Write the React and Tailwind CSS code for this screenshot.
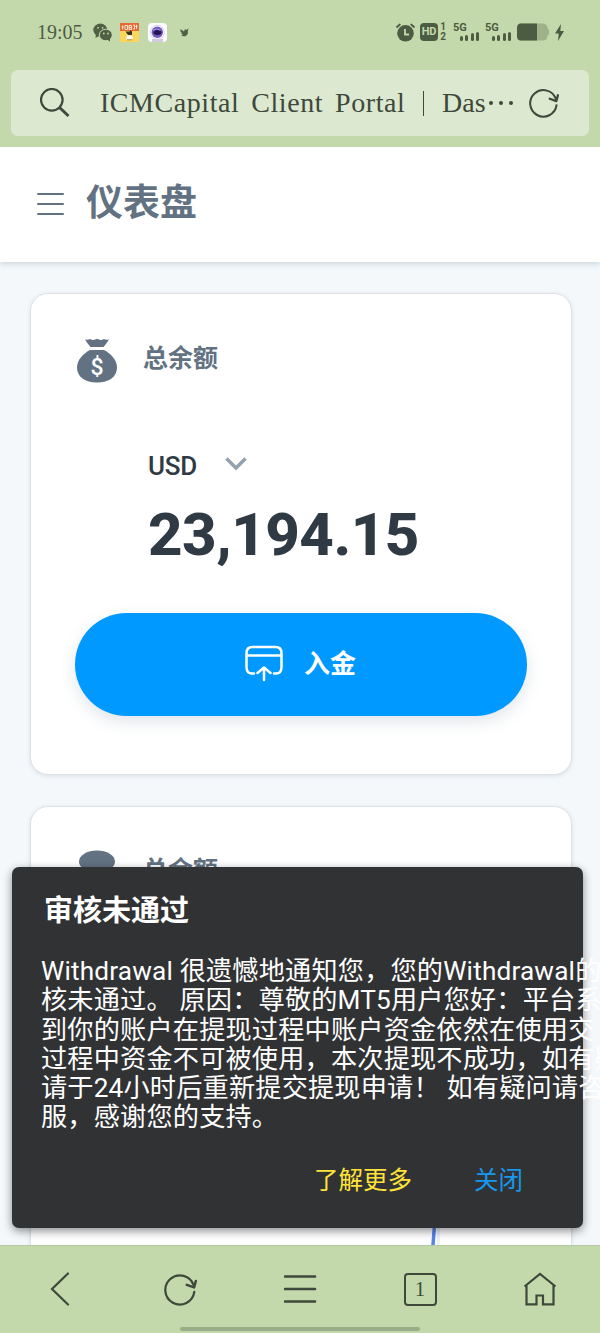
import { useState } from "react";

const MESSAGE = [
  "Withdrawal 很遗憾地通知您，您的Withdrawal的",
  "核未通过。 原因：尊敬的MT5用户您好：平台系",
  "到你的账户在提现过程中账户资金依然在使用交",
  "过程中资金不可被使用，本次提现不成功，如有疑",
  "请于24小时后重新提交提现申请！ 如有疑问请咨",
  "服，感谢您的支持。",
];

function WechatIcon() {
  return (
    <svg width="19" height="19" viewBox="0 0 19 19" className="ml-[10px]">
      <ellipse cx="7.3" cy="7" rx="7" ry="6.5" fill="#4f6045" />
      <path d="M3 11 L2.4 15 L7 12.5Z" fill="#4f6045" />
      <ellipse cx="12.8" cy="12" rx="6.5" ry="5.8" fill="#4f6045" stroke="#c4d9ab" strokeWidth="1" />
      <path d="M14 16.5 L17 18.5 L17 15Z" fill="#4f6045" />
      <g fill="#c4d9ab">
        <circle cx="5" cy="4.8" r="0.9" />
        <circle cx="9.6" cy="4.8" r="0.9" />
        <circle cx="10.8" cy="10.5" r="0.9" />
        <circle cx="15" cy="10.5" r="0.9" />
      </g>
    </svg>
  );
}

function NewsIcon() {
  return (
    <svg width="19" height="19" viewBox="0 0 19 19" className="ml-[8px]">
      <rect width="19" height="19" fill="#fbd65c" />
      <rect width="19" height="8" fill="#e96a35" />
      <path d="M2.5 2.500v4M1.500 4h2.500M5 2.500h2.500v4H5zM9 2.500h2.500v4H9zM9 4.500h2.500M13 2h1.500v4H13M16.500 1.800v4M15.500 3.500h2" fill="none" stroke="#fff1dd" strokeWidth="0.9" />
      <path d="M5.500 8.500h4l1-1.500 1.500 1.500v3.500H8z" fill="#3d3323" />
      <path d="M7 12.500h5l1 4H6z" fill="#fff" />
      <path d="M7 16.800h5.500" stroke="#a57a25" strokeWidth="0.8" />
    </svg>
  );
}

function CameraAppIcon() {
  return (
    <svg width="19" height="19" viewBox="0 0 19 19" className="ml-[9px]">
      <rect width="19" height="19" rx="4" fill="#fbfaff" />
      <path d="M4 16h11v3H4z" fill="#d1cbe0" />
      <circle cx="9.300" cy="9.300" r="7" fill="#fff" stroke="#cfc8e8" strokeWidth="0.8" />
      <circle cx="9.300" cy="9.300" r="5.700" fill="#7059bd" />
      <ellipse cx="9.500" cy="9.500" rx="4" ry="2.400" fill="#251451" />
      <path d="M5.500 7.500q3-3 7 0" fill="none" stroke="#a998e8" strokeWidth="1.200" />
    </svg>
  );
}

function BirdIcon() {
  return (
    <svg width="9" height="9" viewBox="0 0 9 9" className="ml-[13px]">
      <path d="M.5 1 4 3.500 5 1 6 2 8.500.500 7.800 3V6L5.500 8.300 1.200 8 3 6.500 1 5.800 2 5 .5 3.500z" fill="#4f6045" />
    </svg>
  );
}

function AlarmIcon() {
  return (
    <svg width="19" height="19" viewBox="0 0 19 19">
      <circle cx="9.500" cy="10.300" r="8.300" fill="#4c5c43" />
      <path d="M1 4 3.800 1.500M18 4 15.200 1.500" stroke="#4c5c43" strokeWidth="1.800" strokeLinecap="round" />
      <path d="M9 6v5.500h4" fill="none" stroke="#c4d9ab" strokeWidth="1.800" />
    </svg>
  );
}

function Signal() {
  return (
    <div className="w-[26px] h-[18px]">
      <div className="font-['Roboto',sans-serif] font-bold text-[11px] leading-[9px]">5G</div>
      <div className="flex items-end justify-end gap-[2.500px] h-[9px]">
        <i className="w-[3px] h-[5px] rounded-sm bg-[#4c5c43]" />
        <i className="w-[3px] h-[6px] rounded-sm bg-[#4c5c43]" />
        <i className="w-[3px] h-[8px] rounded-sm bg-[#4c5c43]" />
        <i className="w-[3px] h-[9px] rounded-sm bg-[#4c5c43]" />
      </div>
    </div>
  );
}

function StatusBar() {
  return (
    <div className="h-[70px] pt-[22px] pl-[37px] pr-[36px] flex items-start text-[#4c5c43]">
      <div className="flex items-center h-5">
        <span className="w-[46px] text-[20px] leading-5">19:05</span>
        <WechatIcon />
        <NewsIcon />
        <CameraAppIcon />
        <BirdIcon />
      </div>
      <div className="ml-auto flex items-center h-5">
        <AlarmIcon />
        <div className="ml-[5px] w-[18px] h-[18px] rounded-[4px] bg-[#4c5c43] text-[#c4d9ab] font-['Roboto',sans-serif] font-bold text-[11px] leading-[18px] tracking-[-0.300px] text-center">
          HD
        </div>
        <div className="ml-[1px] w-[8px] font-['Roboto',sans-serif] font-bold text-[10px] leading-[10px] text-center">
          <div>1</div>
          <div>2</div>
        </div>
        <div className="ml-[6px] flex gap-[6px]">
          <Signal />
          <Signal />
        </div>
        <svg width="33" height="18" viewBox="0 0 33 18" className="ml-[6px]">
          <path d="M4 .5H26q4 0 4.500 4.500l1.500 2v4l-1.500 2q-.5 4.500-4.500 4.500H4Q0 17.500 0 13V5Q0 .5 4 .5" fill="#9db287" />
          <path d="M20 .5H4Q0 .5 0 5v8q0 4.500 4 4.500h16z" fill="#4c5c43" />
        </svg>
        <svg width="9" height="17" viewBox="0 0 9 17" className="ml-[5px]">
          <path d="M6 0 0 9.500h3.700L3 17 9 7H5.300z" fill="#4c5c43" />
        </svg>
      </div>
    </div>
  );
}

function ReloadIcon({ size }) {
  return (
    <svg width={size} height={size} viewBox="0 0 34 34" fill="none" stroke="currentColor" strokeWidth="2.300" strokeLinecap="round" strokeLinejoin="round">
      <path d="M31.200 19.500A15 15 0 1 1 30.500 12.500" />
      <path d="M23.500 12.200 31 14.800 32.800 8.200" strokeWidth="2.600" />
    </svg>
  );
}

function AddressBar() {
  return (
    <div className="mx-[11px] h-[66px] rounded-[7px] bg-[#dce8d0] flex items-center pl-[29px] pr-[29px] text-[#3e493b]">
      <svg width="30" height="30" viewBox="0 0 30 30" fill="none" stroke="currentColor" strokeWidth="2.200">
        <circle cx="11.800" cy="11.800" r="10.800" />
        <path d="M19.500 19.500 28.500 28" strokeWidth="3" />
      </svg>
      <div className="ml-[30px] w-[429px] flex items-center whitespace-nowrap text-[28px] leading-8 tracking-[0.550px] [word-spacing:4.500px]">
        <span className="w-[305px]">ICMCapital Client Portal</span>
        <i className="ml-[18px] w-px h-[25px] bg-[#3e493b]" />
        <span className="ml-[18px] tracking-normal">Das</span>
        <span className="ml-[3px] flex gap-[6px]">
          <i className="w-1 h-1 rounded-full bg-current" />
          <i className="w-1 h-1 rounded-full bg-current" />
          <i className="w-1 h-1 rounded-full bg-current" />
        </span>
      </div>
      <ReloadIcon size={30} />
    </div>
  );
}

function MoneyBag() {
  return (
    <svg width="40" height="45" viewBox="0 0 40 45">
      <path d="M8 1.500q3.500.7 5-.5 3.500 2 7-.2 3.500 2.200 7 .2 1.500 1.200 5 .5Q30 5 26.500 9h-13Q10 5 8 1.500" fill="#627282" />
      <path d="M13 12h14c6 3 13 9.500 13 17.500C40 39 32 44.500 20 44.500S0 39 0 29.500C0 21.500 7 15 13 12" fill="#627282" />
      <text x="20" y="36.500" textAnchor="middle" fontFamily="Roboto, sans-serif" fontSize="23" fontWeight="500" fill="#fff">$</text>
    </svg>
  );
}

function CoinsIcon() {
  return (
    <svg width="40" height="45" viewBox="0 0 40 45" fill="#627282">
      <ellipse cx="20" cy="11.500" rx="18" ry="11" />
      <path d="M2 22q18 12 36 0v12c0 14-36 14-36 0z" />
    </svg>
  );
}

function CardTitle({ icon, children }) {
  return (
    <div className="flex items-center h-[45px]">
      {icon}
      <span className="ml-[26px] pb-[3px] text-[25px] leading-8 font-bold text-[#627282]">{children}</span>
    </div>
  );
}

function BalanceCard() {
  return (
    <section className="h-[482px] shrink-0 rounded-[18px] border border-[#dde2e7] bg-white shadow-[0_1px_4px_rgba(60,80,100,0.14)] pt-[44px] px-[44px]">
      <div className="pl-[2px]">
        <CardTitle icon={<MoneyBag />}>总余额</CardTitle>
      </div>
      <div className="mt-[68px] ml-[73px] flex items-center h-[30px] text-[#303a44]">
        <span className="w-[48px] text-[26px] leading-[30px] font-medium tracking-[-0.200px]">USD</span>
        <svg width="22" height="14" viewBox="0 0 22 14" className="ml-[29px] mb-[5px]" fill="none" stroke="#94a1ae" strokeWidth="3.500">
          <path d="M1.500 1.500 11 11 20.500 1.500" />
        </svg>
      </div>
      <div className="mt-[22px] ml-[73px] h-[64px] text-[60px] leading-[64px] tracking-[-0.500px] font-extrabold text-[#303a44]">23,194.15</div>
      <button className="mt-[46px] w-[452px] h-[103px] rounded-full bg-[#0099ff] shadow-[0_6px_16px_rgba(70,100,130,0.16)] text-white flex items-center justify-center">
        <svg width="38" height="37" viewBox="0 0 38 37" fill="none" stroke="currentColor" strokeWidth="2.500" strokeLinecap="round" strokeLinejoin="round" className="-ml-px mb-[2px]">
          <path d="M9 28.500H7Q1.500 28.500 1.500 22V8Q1.500 2 7.500 2h23Q36.500 2 36.500 8v14q0 6.500-5.500 6.500h-2M2 10.500h34M19 35V23M12.500 28 19 22.500 25.500 28" />
        </svg>
        <span className="ml-[21px] pb-[2px] text-[26px] leading-8 font-bold">入金</span>
      </button>
    </section>
  );
}

function Snackbar({ onClose }) {
  return (
    <div className="absolute left-[12px] top-[720px] w-[571px] h-[361px] rounded-[7px] bg-[#313234] text-white shadow-[0_3px_10px_rgba(0,0,0,0.45)]">
      <h2 className="pt-[25px] pl-[32px] text-[29px] leading-[38px] font-bold">审核未通过</h2>
      <div className="mt-[27px] pl-[29px] text-[26.200px] leading-[29.300px] tracking-[0.170px] whitespace-pre">
        {MESSAGE.map((line) => (
          <div key={line}>{line}</div>
        ))}
      </div>
      <div className="mt-[31px] pr-[60px] flex justify-end gap-[62px] text-[24.500px] leading-[34px]">
        <button className="text-[#ffe338]">了解更多</button>
        <button onClick={onClose} className="text-[#1698ed]">关闭</button>
      </div>
    </div>
  );
}

function BottomNav() {
  return (
    <nav className="h-[88px] shrink-0 bg-[#c4d9ab] border-t border-[#b5c9a0] text-[#3e493b]">
      <div className="h-[80px] pt-[6px] grid grid-cols-5 place-items-center">
        <svg width="20" height="34" viewBox="0 0 20 34" fill="none" stroke="currentColor" strokeWidth="2.200" strokeLinecap="round">
          <path d="M18 1.500 2 17 18 32.500" />
        </svg>
        <ReloadIcon size={33} />
        <svg width="33" height="30" viewBox="0 0 33 30" stroke="currentColor" strokeWidth="2.700" strokeLinecap="round">
          <path d="M1 2.500h30M1 15h30M1 27.500h30" />
        </svg>
        <span className="w-[33px] h-[33px] rounded-[4px] border-2 border-current text-center font-['Liberation_Serif',serif] text-[21px] leading-[29px]">1</span>
        <svg width="34" height="34" viewBox="0 0 34 34" fill="none" stroke="currentColor" strokeWidth="2.200">
          <path d="M1.500 14.500 17 1.800l15.500 12.700M3.500 13.500v18.800h10v-8.800h6.500v8.800h10.500V13.500" />
        </svg>
      </div>
      <div className="mx-auto mt-[1px] w-[240px] h-[4px] rounded-full bg-[#9bac88]" />
    </nav>
  );
}

export default function App() {
  const [open, setOpen] = useState(true);

  return (
    <div className="w-[600px] h-[1333px] flex flex-col overflow-hidden bg-[#f4f8fb] font-['Roboto','Noto_Sans_CJK_SC',sans-serif]">
      <header className="h-[147px] shrink-0 bg-[#c4d9ab] font-['Liberation_Serif',serif]">
        <StatusBar />
        <AddressBar />
      </header>

      <main className="relative flex-1 min-h-0 overflow-hidden flex flex-col">
        <div className="h-[115px] shrink-0 bg-white flex items-center pl-[37px] shadow-[0_2px_6px_rgba(50,70,90,0.2)]">
          <svg width="27" height="24" viewBox="0 0 27 24" stroke="#627282" strokeWidth="2" strokeLinecap="round" className="mb-px">
            <path d="M1 2h25M1 12h25M1 22h25" />
          </svg>
          <h1 className="ml-[22px] pb-[2px] text-[37px] leading-[48px] font-bold text-[#627282]">仪表盘</h1>
        </div>
        <div className="pt-[31px] pl-[30px] pr-[28px] flex flex-col gap-[31px]">
          <BalanceCard />
          <section className="h-[500px] shrink-0 rounded-[18px] border border-[#dde2e7] bg-white shadow-[0_1px_4px_rgba(60,80,100,0.14)] pt-[43px] px-[46px]">
            <CardTitle icon={<CoinsIcon />}>总余额</CardTitle>
            <svg width="12" height="80" viewBox="0 0 12 80" className="mt-[310px] ml-[351px]">
              <path d="M10 0h4v80H7z" fill="#e9f1ff" />
              <path d="M8 0 2 80" stroke="#5484ec" strokeWidth="3.500" />
            </svg>
          </section>
        </div>
        {open && <Snackbar onClose={() => setOpen(false)} />}
      </main>

      <BottomNav />
    </div>
  );
}
